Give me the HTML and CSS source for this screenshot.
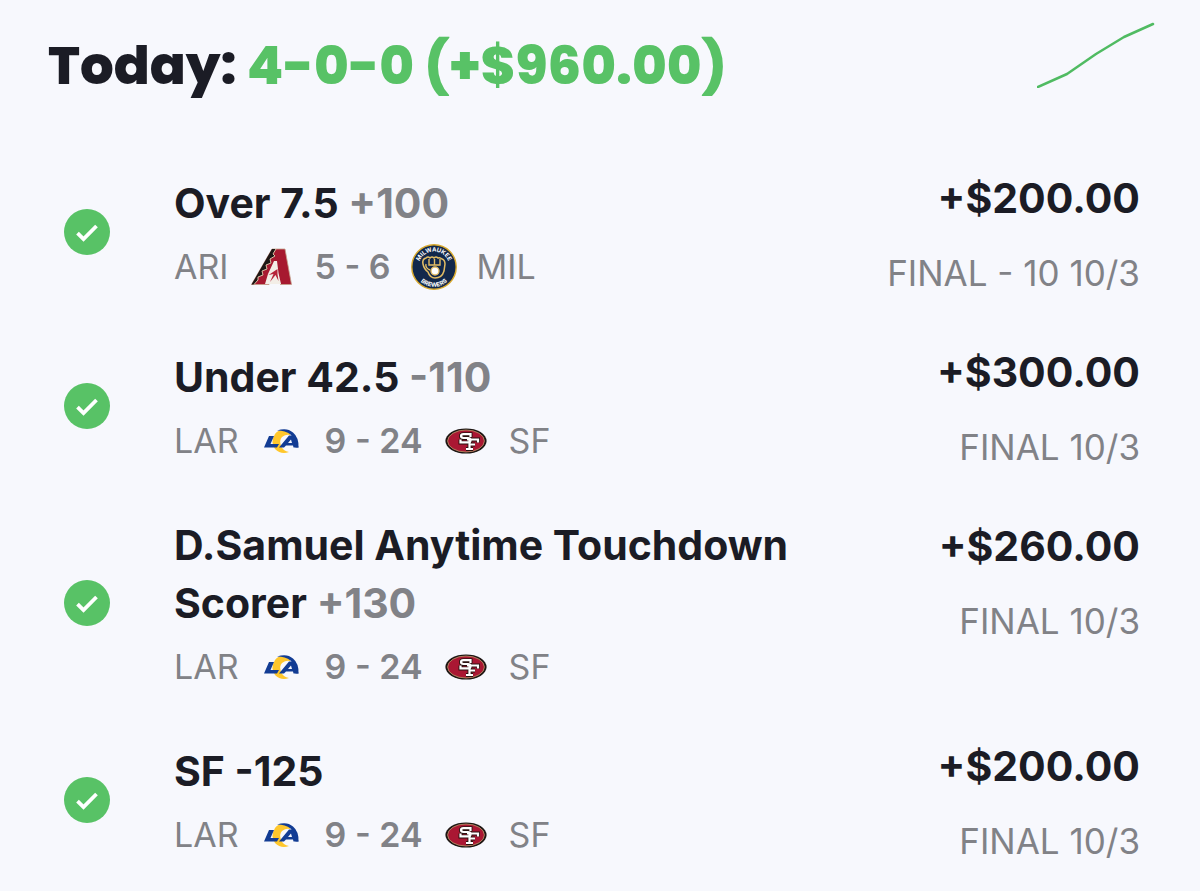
FILE: index.html
```html
<!DOCTYPE html>
<html lang="en">
  <head>
    <meta charset="UTF-8" />
    <meta name="viewport" content="width=device-width, initial-scale=1.0" />
    <title>Today's bets</title>
    <link rel="stylesheet" href="styles.css" />
  </head>
  <body>
    <!-- shared icons -->
    <svg class="sprite" aria-hidden="true">
      <symbol id="check" viewBox="0 0 46 46">
        <circle cx="23" cy="23" r="23" fill="#58c266" />
        <path d="M13.5 24.2l6 5.8 13-13" fill="none" stroke="#fff" stroke-width="3.8" />
      </symbol>

      <symbol id="lar" viewBox="0 0 46 46">
        <path d="M31 14q-10-5-15 2-5 8 0 15 6 6 14 3-6-1-8-6-2-6 1-9 4-3 8-2z" fill="#ffc72c" />
        <path d="M18 12.500q10-3.500 16 2 6 5 5.500 15h-3q-.5-9-5-13-5-4-13.500-4z" fill="#123c94" />
        <path d="M10 18h5l-3.500 8H20l-2 3.500H5z" fill="#123c94" />
        <path d="M20 29.500L30 17.500h6l3.500 12h-5l-.5-2h-7l-2 2zM29 25h4l-1-3.500z" fill="#123c94" fill-rule="evenodd" />
      </symbol>

      <symbol id="sf" viewBox="0 0 46 46">
        <ellipse cx="23" cy="23" rx="20.600" ry="12.600" fill="#1d1513" />
        <ellipse cx="23" cy="23" rx="18.400" ry="11" fill="#aa1733" stroke="#b99a6b" stroke-width=".8" />
        <g fill="none" stroke="#2a1210" stroke-width="4">
          <path d="M35 24.500v-3H24M26.500 21.500v9.500M26.500 26.500h5.500M23 31h7" />
          <path d="M27.500 19v-2.800H20.500q-2.500 0-2.500 1.900t2.500 1.900H25q2.500 0 2.500 2.200T25 24.400h-7.500v-3" />
        </g>
        <g fill="none" stroke="#fff" stroke-width="2.200">
          <path d="M35 24.500v-3H24M26.500 21.500v9.500M26.500 26.500h5.500M23 31h7" />
          <path d="M27.500 19v-2.800H20.500q-2.500 0-2.500 1.900t2.500 1.900H25q2.500 0 2.500 2.200T25 24.400h-7.500v-3" />
        </g>
      </symbol>
    </svg>

    <header class="summary">
      <h1>Today: <span class="record">4-0-0 (+$960.00)</span></h1>
      <svg class="trend" viewBox="0 0 118 66" role="img" aria-label="Profit trend">
        <path d="M1 65l29-13 29-20 28-17 29-13" />
      </svg>
    </header>

    <main class="bets">
      <article class="bet">
        <svg class="status" role="img" aria-label="Won"><use href="#check" /></svg>
        <div class="pick">
          <h2>Over 7.5 <span class="odds">+100</span></h2>
          <div class="game">
            <span>ARI</span>
            <svg class="logo" viewBox="0 0 46 46">
              <path d="M3.500 40.500L24 5h13l6.500 35.500h-11L30 33l-3-5-4 6-2 6.500z" fill="#a71930" stroke="#c3a18a" stroke-width=".8" />
              <path d="M3.500 40.500L24 5h4l-3 5 2 2-5 3 1 4-5 2 1 4-5 2 1 4-5 2v3l-4 4.500z" fill="#1d1715" />
              <path d="M28 5l-3 5 2 2-5 3 1 4-5 2 1 4-5 2 1 4-5 2v3l-4 4.500" fill="none" stroke="#d8c0a4" stroke-width="1" />
              <path d="M26 17h3l1.500 12 2.500 11H17l3-10z" fill="#f3eee7" />
              <path d="M29.500 25l-9 6 5-1-3.500 8 5.500-7 3 6-1-7z" fill="#b6243a" />
            </svg>
            <span class="score">5 - 6</span>
            <svg class="logo" viewBox="0 0 46 46">
              <circle cx="23" cy="23" r="22.200" fill="#12284b" stroke="#d9a92c" stroke-width="1.400" />
              <path id="arc-top" d="M7.500 23a15.500 15.500 0 0 1 31 0" fill="none" />
              <path id="arc-bottom" d="M3.200 23a19.800 19.800 0 0 0 39.600 0" fill="none" />
              <text class="ring-text"><textPath href="#arc-top" startOffset="50%">MILWAUKEE</textPath></text>
              <text class="ring-text"><textPath href="#arc-bottom" startOffset="50%">BREWERS</textPath></text>
              <path d="M12 20q-1-5 3-6 2-2 4 0 2-2 4 0 2-2 4 0 2-1 4 1 3 1 3 5l-1 7q-2 7-9 7-5 0-7-6-4-3-5-8z" fill="#12284b" stroke="#e3bd65" stroke-width="1.500" />
              <path d="M18 15v6h11v-6M23.500 15v6M15 20q-1 4 4 6" fill="none" stroke="#e3bd65" stroke-width="1.400" />
              <circle cx="24" cy="27" r="4" fill="#fff" stroke="#e3bd65" stroke-width="1.400" />
            </svg>
            <span>MIL</span>
          </div>
        </div>
        <div class="result">
          <div class="amount">+$200.00</div>
          <div class="final">FINAL - 10 10/3</div>
        </div>
      </article>

      <article class="bet">
        <svg class="status" role="img" aria-label="Won"><use href="#check" /></svg>
        <div class="pick">
          <h2>Under 42.5 <span class="odds">-110</span></h2>
          <div class="game">
            <span>LAR</span>
            <svg class="logo"><use href="#lar" /></svg>
            <span class="score">9 - 24</span>
            <svg class="logo"><use href="#sf" /></svg>
            <span>SF</span>
          </div>
        </div>
        <div class="result">
          <div class="amount">+$300.00</div>
          <div class="final">FINAL 10/3</div>
        </div>
      </article>

      <article class="bet">
        <svg class="status" role="img" aria-label="Won"><use href="#check" /></svg>
        <div class="pick">
          <h2>D.Samuel Anytime Touchdown Scorer <span class="odds">+130</span></h2>
          <div class="game">
            <span>LAR</span>
            <svg class="logo"><use href="#lar" /></svg>
            <span class="score">9 - 24</span>
            <svg class="logo"><use href="#sf" /></svg>
            <span>SF</span>
          </div>
        </div>
        <div class="result">
          <div class="amount">+$260.00</div>
          <div class="final">FINAL 10/3</div>
        </div>
      </article>

      <article class="bet">
        <svg class="status" role="img" aria-label="Won"><use href="#check" /></svg>
        <div class="pick">
          <h2>SF -125</h2>
          <div class="game">
            <span>LAR</span>
            <svg class="logo"><use href="#lar" /></svg>
            <span class="score">9 - 24</span>
            <svg class="logo"><use href="#sf" /></svg>
            <span>SF</span>
          </div>
        </div>
        <div class="result">
          <div class="amount">+$200.00</div>
          <div class="final">FINAL 10/3</div>
        </div>
      </article>
    </main>
  </body>
</html>
```

FILE: styles.css
```css
* {
  box-sizing: border-box;
}
body {
  margin: 0;
  background-color: #f7f8fd;
  color: #1b1c25;
  font-family: Inter, "Liberation Sans", sans-serif;
}
h1,
h2 {
  margin: 0;
}
.sprite {
  position: absolute;
  width: 0;
  height: 0;
}
.summary {
  display: flex;
  justify-content: space-between;
  align-items: flex-start;
  padding: 22px 45px 0 48px;
}
.summary h1 {
  font-family: Poppins, Inter, sans-serif;
  font-size: 53px;
  font-weight: 800;
  line-height: 88px;
}
.record {
  color: #58c266;
}
.trend {
  width: 118px;
  height: 66px;
}
.trend path {
  fill: none;
  stroke: #50bb62;
  stroke-width: 2.5;
  stroke-linecap: round;
  stroke-linejoin: round;
}
.bets {
  display: flex;
  flex-direction: column;
  gap: 46px;
  padding: 58px 60px 27px 64px;
}
.bet {
  display: flex;
  align-items: center;
}
.status {
  flex: none;
  width: 46px;
  height: 46px;
  margin-right: 64px;
}
.pick {
  flex: 1;
}
.pick h2 {
  font-size: 41px;
  font-weight: 700;
  line-height: 58px;
}
.odds,
.game,
.final {
  color: #818287;
}
.game {
  display: flex;
  align-items: center;
  gap: 20px;
  margin-top: 12px;
  font-size: 34px;
  line-height: 46px;
}
.score {
  font-weight: 600;
}
.logo {
  width: 46px;
  height: 46px;
}
.ring-text {
  fill: #fff;
  font-size: 6px;
  font-weight: 700;
  text-anchor: middle;
}
.result {
  align-self: flex-start;
  margin-left: 60px;
  text-align: right;
  white-space: nowrap;
}
.amount {
  font-size: 41px;
  font-weight: 700;
  line-height: 60px;
}
.final {
  margin-top: 22px;
  font-size: 35px;
  line-height: 46px;
}
```
